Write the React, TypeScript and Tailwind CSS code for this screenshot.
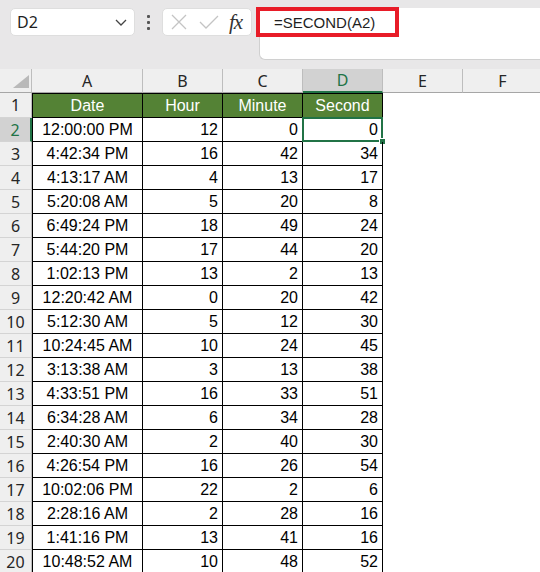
import React from "react";

const rows: [string, number, number, number][] = [
  ["12:00:00 PM", 12, 0, 0],
  ["4:42:34 PM", 16, 42, 34],
  ["4:13:17 AM", 4, 13, 17],
  ["5:20:08 AM", 5, 20, 8],
  ["6:49:24 PM", 18, 49, 24],
  ["5:44:20 PM", 17, 44, 20],
  ["1:02:13 PM", 13, 2, 13],
  ["12:20:42 AM", 0, 20, 42],
  ["5:12:30 AM", 5, 12, 30],
  ["10:24:45 AM", 10, 24, 45],
  ["3:13:38 AM", 3, 13, 38],
  ["4:33:51 PM", 16, 33, 51],
  ["6:34:28 AM", 6, 34, 28],
  ["2:40:30 AM", 2, 40, 30],
  ["4:26:54 PM", 16, 26, 54],
  ["10:02:06 PM", 22, 2, 6],
  ["2:28:16 AM", 2, 28, 16],
  ["1:41:16 PM", 13, 41, 16],
  ["10:48:52 AM", 10, 48, 52],
];

function Toolbar() {
  return (
    <div className="relative h-[69px] bg-[#e8e7e8] flex items-start pt-[8px] pl-[10px] font-['Noto_Sans',sans-serif]">
      <div className="w-[125px] h-[28px] bg-white rounded-[5px] border border-[#dedede] flex items-center justify-between pl-[6px] pr-[6px] shrink-0">
        <span className="text-[16px] text-[#1f1f1f] leading-none">D2</span>
        <svg width="14" height="10" viewBox="0 0 14 10">
          <path d="M2 3 L7 8 L12 3" fill="none" stroke="#444" strokeWidth="1.3" />
        </svg>
      </div>
      <div className="w-[27px] h-[28px] flex flex-col items-center justify-center gap-[3px] shrink-0">
        <div className="w-[3px] h-[3px] bg-[#555] rounded-[1px]" />
        <div className="w-[3px] h-[3px] bg-[#555] rounded-[1px]" />
        <div className="w-[3px] h-[3px] bg-[#555] rounded-[1px]" />
      </div>
      <div className="w-[90px] h-[28px] bg-white rounded-[5px] border border-[#dedede] flex items-center pl-[7px] shrink-0">
        <svg width="18" height="18" viewBox="0 0 18 18">
          <path d="M2 2 L16 16 M16 2 L2 16" stroke="#c4c4c4" strokeWidth="1.3" fill="none" />
        </svg>
        <svg width="22" height="18" viewBox="0 0 22 18" className="ml-[10px]">
          <path d="M2 9 L8 15 L20 3" stroke="#c4c4c4" strokeWidth="1.3" fill="none" />
        </svg>
        <span className="ml-[9px] text-[21px] italic leading-none text-[#333] font-['Liberation_Serif',serif] tracking-[-1px]">fx</span>
      </div>
      <div className="relative ml-[7px] flex-1 h-[52px] bg-white rounded-bl-[6px] border-b border-l border-[#d0d0d0]">
        <div className="absolute left-[-4px] top-[-1px] w-[143px] h-[30px] border-[4px] border-[#e81c28]" />
        <div className="absolute left-[14px] top-[4px] text-[15px] text-[#1f1f1f] font-['Liberation_Sans',sans-serif]">
          =SECOND(A2)
        </div>
      </div>
    </div>
  );
}

function ColHeader({ label, w, active }: { label: string; w: string; active?: boolean }) {
  return (
    <div
      className={
        active
          ? `${w} shrink-0 h-full bg-[#d2d2d2] border-r border-[#bdbdbd] border-b-2 border-b-[#217346] flex items-center justify-center text-[16px] text-[#217346]`
          : `${w} shrink-0 h-full bg-[#efefef] border-r border-b border-[#bdbdbd] border-b-[#a6a6a6] flex items-center justify-center text-[16px] text-[#262626]`
      }
    >
      {label}
    </div>
  );
}

export default function App() {
  return (
    <div className="w-[540px] h-[572px] overflow-hidden bg-white">
      <Toolbar />
      <div className="flex h-[24px] font-['Noto_Sans',sans-serif] bg-[#efefef]">
        <div className="relative w-[32px] shrink-0 h-full bg-[#efefef] border-r border-b border-[#bdbdbd] border-b-[#a6a6a6]">
          <svg width="32" height="24" className="absolute left-0 top-0">
            <polygon points="13,19 29,19 29,6" fill="#b9b9b9" />
          </svg>
        </div>
        <ColHeader label="A" w="w-[111px]" />
        <ColHeader label="B" w="w-[80px]" />
        <ColHeader label="C" w="w-[80px]" />
        <ColHeader label="D" w="w-[80px]" active />
        <ColHeader label="E" w="w-[80px]" />
        <ColHeader label="F" w="w-[80px]" />
        <div className="flex-1 h-full border-b border-[#a6a6a6]" />
      </div>
      <div className="flex h-[25px] font-['Liberation_Sans',sans-serif] text-[16px]">
        <div className="w-[32px] shrink-0 h-full bg-[#efefef] border-r border-b border-[#bdbdbd] border-b-[#d4d4d4] flex items-center justify-center text-[#262626] font-['Noto_Sans',sans-serif] text-[16px]">
          1
        </div>
        {["Date", "Hour", "Minute", "Second"].map((h, i) => (
          <div
            key={h}
            className={`${i === 0 ? "w-[111px] border-l" : "w-[80px]"} shrink-0 h-full bg-[#548235] text-white border-r border-t border-b border-black flex items-center justify-center`}
          >
            {h}
          </div>
        ))}
      </div>
      {rows.map((r, idx) => {
        const n = idx + 2;
        const sel = n === 2;
        return (
          <div key={n} className="flex h-[24px] font-['Liberation_Sans',sans-serif] text-[16px] text-black">
            <div
              className={
                sel
                  ? "w-[32px] shrink-0 h-full bg-[#d2d2d2] border-r-2 border-r-[#217346] border-b border-b-[#d4d4d4] flex items-center justify-center text-[#217346] font-['Noto_Sans',sans-serif] text-[16px]"
                  : "w-[32px] shrink-0 h-full bg-[#efefef] border-r border-b border-[#bdbdbd] border-b-[#d4d4d4] flex items-center justify-center text-[#262626] font-['Noto_Sans',sans-serif] text-[16px]"
              }
            >
              {n}
            </div>
            <div className="w-[111px] shrink-0 h-full border-l border-r border-b border-black flex items-center justify-center">
              {r[0]}
            </div>
            <div className="w-[80px] shrink-0 h-full border-r border-b border-black flex items-center justify-end pr-[4px]">
              {r[1]}
            </div>
            <div className="w-[80px] shrink-0 h-full border-r border-b border-black flex items-center justify-end pr-[4px]">
              {r[2]}
            </div>
            <div className="relative w-[80px] shrink-0 h-full border-r border-b border-black flex items-center justify-end pr-[4px]">
              {r[3]}
              {sel && (
                <>
                  <div className="absolute left-[-1px] top-[-1px] right-[-1px] bottom-[-1px] border-2 border-[#217346]" />
                  <div className="absolute right-[-4px] bottom-[-4px] w-[7px] h-[7px] bg-[#217346] border border-white" />
                </>
              )}
            </div>
          </div>
        );
      })}
    </div>
  );
}
